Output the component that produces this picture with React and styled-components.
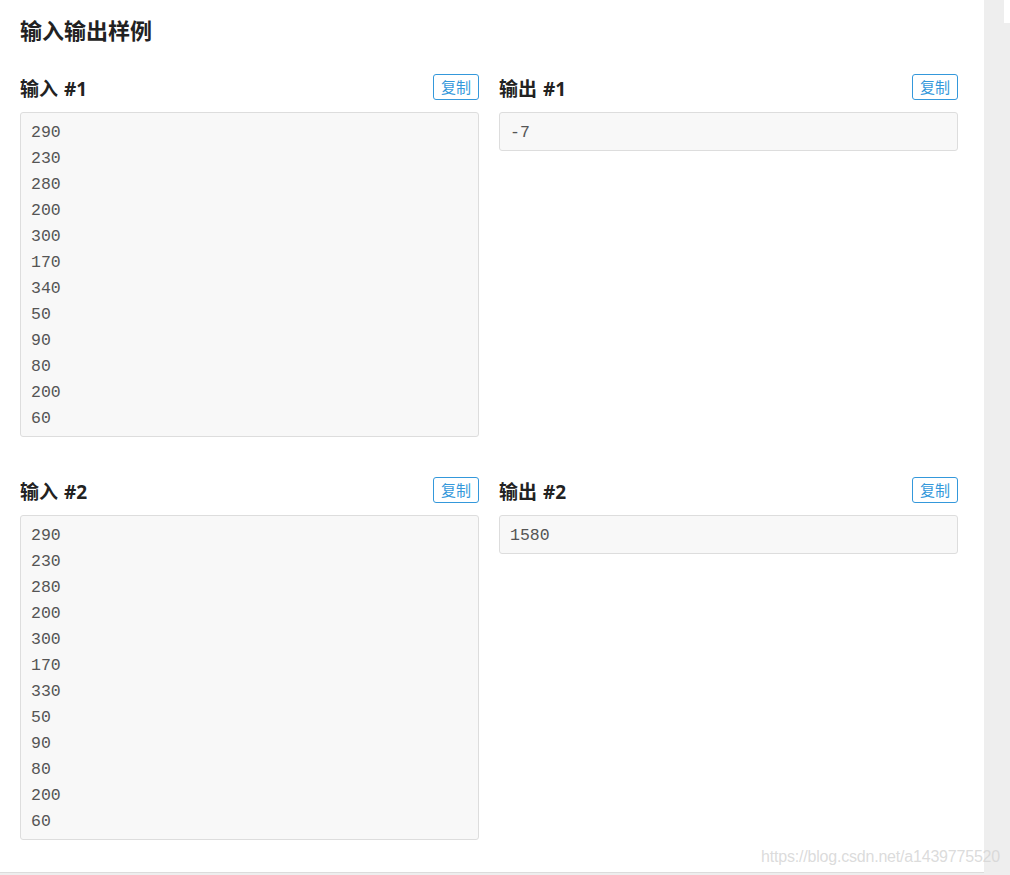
import React from "react";
import styled, { createGlobalStyle } from "styled-components";

const GlobalStyle = createGlobalStyle`
  html, body {
    margin: 0;
    padding: 0;
    background: #eeeeee;
  }
  body {
    font-family: "Open Sans", "Noto Sans CJK SC", sans-serif;
    color: #333;
  }
`;

const Page = styled.div`
  position: relative;
  display: flex;
  width: 1010px;
  height: 875px;
  overflow: hidden;
  background: #eeeeee;
`;

const Panel = styled.div`
  width: 984px;
  height: 873px;
  box-sizing: border-box;
  background: #fff;
  padding: 13px 20px 0 20px;
  border-bottom: 1px solid #dcdcdc;
`;

const Side = styled.div`
  flex: 1;
  display: flex;
  justify-content: flex-end;
  align-items: flex-start;
`;

const SideTab = styled.div`
  width: 6px;
  height: 23px;
  background: #fff;
`;

const Title = styled.h2`
  margin: 0 0 28px 0;
  font-size: 22px;
  line-height: 33px;
  font-weight: 700;
  color: #222;
  font-family: "Noto Sans CJK SC", sans-serif;
`;

const Row = styled.div`
  display: grid;
  grid-template-columns: 459px 459px;
  column-gap: 20px;
  align-items: start;
  margin-bottom: 40px;
`;

const Sample = styled.div`
  display: flex;
  flex-direction: column;
  gap: 12px;
`;

const Header = styled.div`
  display: flex;
  align-items: center;
  justify-content: space-between;
  height: 26px;
`;

const Label = styled.h3`
  margin: 0;
  padding-top: 1px;
  font-size: 19px;
  font-weight: 700;
  color: #222;
  font-family: "Open Sans", "Noto Sans CJK SC", sans-serif;
  word-spacing: 1px;
`;

const CopyButton = styled.button`
  box-sizing: border-box;
  height: 26px;
  padding: 0 7px;
  border: 1px solid #3498db;
  border-radius: 3px;
  background: #fff;
  color: #3498db;
  font-size: 15px;
  font-family: "Noto Sans CJK SC", sans-serif;
  line-height: 24px;
  cursor: pointer;
`;

const Code = styled.pre`
  margin: 0;
  box-sizing: border-box;
  padding: 7px 10px 4px 10px;
  background: #f8f8f8;
  border: 1px solid #dddddd;
  border-radius: 3px;
  font-family: "Liberation Mono", "Courier New", monospace;
  font-size: 16.5px;
  line-height: 26px;
  color: #555;
`;

const Watermark = styled.div`
  position: absolute;
  right: 10px;
  bottom: 9px;
  font-family: "Liberation Sans", Arial, sans-serif;
  font-size: 16px;
  color: rgba(215, 215, 215, 0.9);
  letter-spacing: -0.2px;
`;

const samples = [
  {
    n: 1,
    input: ["290", "230", "280", "200", "300", "170", "340", "50", "90", "80", "200", "60"],
    output: ["-7"],
  },
  {
    n: 2,
    input: ["290", "230", "280", "200", "300", "170", "330", "50", "90", "80", "200", "60"],
    output: ["1580"],
  },
];

function SampleBlock({ label, lines }) {
  return (
    <Sample>
      <Header>
        <Label>{label}</Label>
        <CopyButton>复制</CopyButton>
      </Header>
      <Code>{lines.join("\n")}</Code>
    </Sample>
  );
}

export default function App() {
  return (
    <>
      <GlobalStyle />
      <Page>
        <Panel>
          <Title>输入输出样例</Title>
          {samples.map((s) => (
            <Row key={s.n}>
              <SampleBlock label={`输入 #${s.n}`} lines={s.input} />
              <SampleBlock label={`输出 #${s.n}`} lines={s.output} />
            </Row>
          ))}
        </Panel>
        <Side>
          <SideTab />
        </Side>
        <Watermark>https://blog.csdn.net/a1439775520</Watermark>
      </Page>
    </>
  );
}
